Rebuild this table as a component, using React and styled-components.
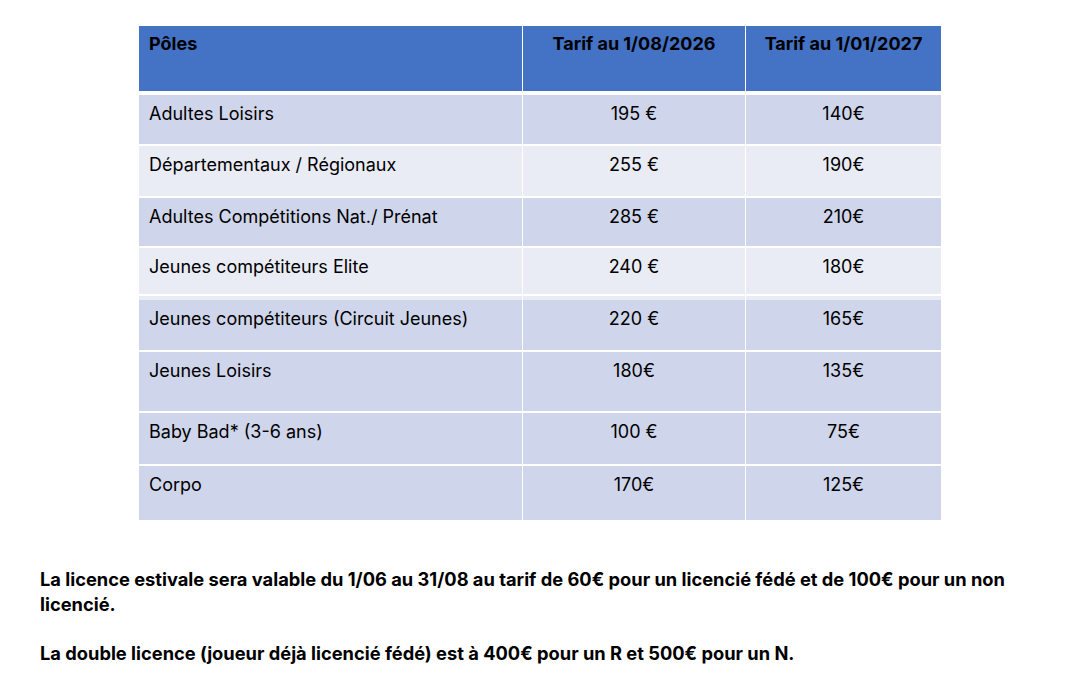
import React from "react";
import styled, { createGlobalStyle } from "styled-components";

const GlobalStyle = createGlobalStyle`
  *, *::before, *::after { box-sizing: border-box; }
  body {
    margin: 0;
    background: #ffffff;
    font-family: Inter, "Liberation Sans", sans-serif;
    color: #000;
  }
`;

// Styled Components
const Page = styled.div`
  padding-top: 26px;
`;

const Table = styled.div`
  margin-left: 139px;
  width: 802px;
  display: flex;
  flex-direction: column;
`;

const HeadRow = styled.div`
  display: grid;
  grid-template-columns: 383px 223px 196px;
  height: 65px;
  background: #4472c4;
  margin-bottom: 4px;
`;

const Row = styled.div`
  display: grid;
  grid-template-columns: 383px 223px 196px;
  height: ${(props) => props.$height}px;
  border-bottom: ${(props) => (props.$last || props.$split ? 0 : 2)}px solid #ffffff;
  background: ${(props) =>
    props.$split
      ? "linear-gradient(to bottom, #e9ebf5 0 46px, #ffffff 46px 48px, #e9ebf5 48px 100%)"
      : props.$tone === "light"
      ? "#e9ebf5"
      : "#cfd5ea"};
`;

const Th = styled.div`
  font-size: 18px;
  font-weight: 700;
  line-height: 22px;
  padding: 7px 10px 0;
  text-align: ${(props) => (props.$center ? "center" : "left")};
  border-left: ${(props) => (props.$center ? "1px solid #ffffff" : "none")};
`;

const Td = styled.div`
  font-size: 18px;
  line-height: 22px;
  padding: 8px 10px 0;
  text-align: ${(props) => (props.$center ? "center" : "left")};
  border-left: ${(props) => (props.$center ? "1px solid #ffffff" : "none")};
`;

const Notes = styled.div`
  margin-top: 47px;
  padding-left: 40px;
  font-size: 18.3px;
  font-weight: 700;
  line-height: 24.5px;
`;

const Note = styled.p`
  margin: 0 0 25px;
`;

const rows = [
  { pole: "Adultes Loisirs", a: "195 €", b: "140€", h: 51, tone: "dark" },
  { pole: "Départementaux / Régionaux", a: "255 €", b: "190€", h: 52, tone: "light" },
  { pole: "Adultes Compétitions Nat./ Prénat", a: "285 €", b: "210€", h: 50, tone: "dark" },
  { pole: "Jeunes compétiteurs Elite", a: "240 €", b: "180€", h: 52, tone: "light", split: true },
  { pole: "Jeunes compétiteurs (Circuit Jeunes)", a: "220 €", b: "165€", h: 52, tone: "dark" },
  { pole: "Jeunes Loisirs", a: "180€", b: "135€", h: 61, tone: "dark" },
  { pole: "Baby Bad* (3-6 ans)", a: "100 €", b: "75€", h: 53, tone: "dark" },
  { pole: "Corpo", a: "170€", b: "125€", h: 54, tone: "dark" },
];

export default function App() {
  return (
    <Page>
      <GlobalStyle />
      <Table>
        <HeadRow>
          <Th>Pôles</Th>
          <Th $center>Tarif au 1/08/2026</Th>
          <Th $center>Tarif au 1/01/2027</Th>
        </HeadRow>
        {rows.map((row, i) => (
          <Row
            key={row.pole}
            $last={i === rows.length - 1}
            $height={row.h}
            $tone={row.tone}
            $split={row.split}
          >
            <Td>{row.pole}</Td>
            <Td $center>{row.a}</Td>
            <Td $center>{row.b}</Td>
          </Row>
        ))}
      </Table>
      <Notes>
        <Note>
          La licence estivale sera valable du 1/06 au 31/08 au tarif de 60€ pour un licencié fédé et de 100€ pour un non
          <br />
          licencié.
        </Note>
        <Note>
          La double licence (joueur déjà licencié fédé) est à 400€ pour un R et 500€ pour un N.
        </Note>
      </Notes>
    </Page>
  );
}
